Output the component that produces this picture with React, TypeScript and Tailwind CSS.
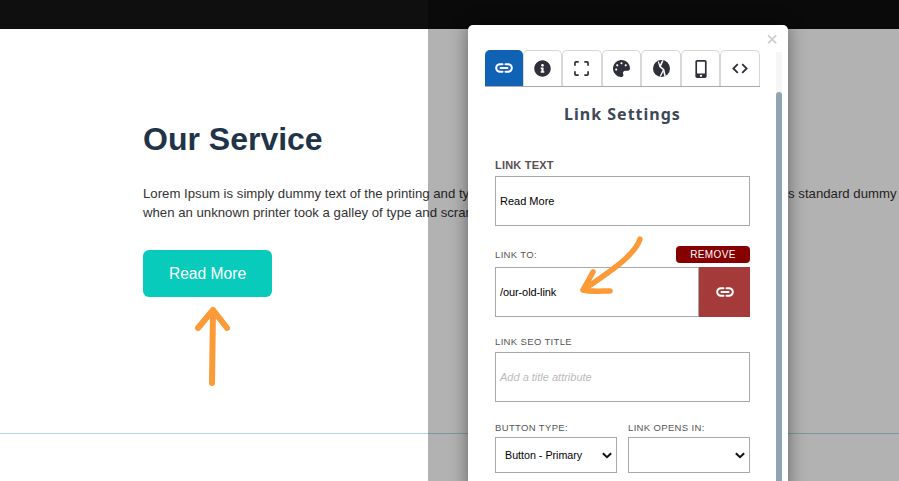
import { FaInfoCircle, FaMobileAlt, FaPalette } from "react-icons/fa";

const sans = "font-['Liberation_Sans',Arial,sans-serif]";

function LinkIcon({ className }: { className: string }) {
  return (
    <svg viewBox="0 0 18 10" className={className} fill="none" stroke="currentColor" strokeWidth="2">
      <path d="M7.5 1.2H5a3.8 3.8 0 0 0 0 7.6h2.5M10.5 1.2H13a3.8 3.8 0 0 1 0 7.6h-2.5M5.5 5h7" strokeLinecap="round" />
    </svg>
  );
}

function ExpandIcon() {
  return (
    <svg viewBox="0 0 16 16" className="w-[15px] h-[15px]" fill="none" stroke="#2f2f3a" strokeWidth="1.8">
      <path d="M1 5V2a1 1 0 0 1 1-1h3M11 1h3a1 1 0 0 1 1 1v3M15 11v3a1 1 0 0 1-1 1h-3M5 15H2a1 1 0 0 1-1-1v-3" />
    </svg>
  );
}

function ApertureIcon() {
  return (
    <svg viewBox="0 0 16 16" className="w-[17px] h-[17px]">
      <circle cx="8" cy="8" r="8" fill="#2f2f3a" />
      <path d="M9.2 0.5 6.6 6.2 10 9.2 11.3 15" fill="none" stroke="#fff" strokeWidth="1.5" />
      <path d="M5 1.5 6.6 6.2M10 9.2 6.8 15.5" fill="none" stroke="#fff" strokeWidth="1.2" />
    </svg>
  );
}

function CodeIcon() {
  return (
    <svg viewBox="0 0 18 12" className="w-[16px] h-[11px]" fill="none" stroke="#2f2f3a" strokeWidth="2">
      <path d="M6.5 1 1.5 6l5 5M11.5 1l5 5-5 5" />
    </svg>
  );
}

function Tab({ children, active }: { children: React.ReactNode; active?: boolean }) {
  if (active) {
    return (
      <div className="flex-1 h-[36px] flex items-center justify-center rounded-t-[5px] bg-[#0f62b4] text-white">
        {children}
      </div>
    );
  }
  return (
    <div className="flex-1 h-[36px] flex items-center justify-center rounded-t-[5px] border border-b-0 border-[#d8d8d8] bg-white text-[#2f2f3a]">
      {children}
    </div>
  );
}

function FieldLabel({ children }: { children: React.ReactNode }) {
  return <div className="text-[9.5px] leading-[12px] tracking-[0.35px] text-[#555]">{children}</div>;
}

function Chevron() {
  return (
    <svg viewBox="0 0 12 8" className="w-[10px] h-[7px]" fill="none" stroke="#111" strokeWidth="2.4">
      <path d="M1 1.2 6 6l5-4.8" />
    </svg>
  );
}

function SelectBox({ value, width }: { value?: string; width: string }) {
  return (
    <div className={`${width} h-[36px] border border-[#a9a9a9] flex items-center justify-between pl-[9px] pr-[4px] text-[10.7px] text-black`}>
      <span>{value}</span>
      <Chevron />
    </div>
  );
}

export default function App() {
  return (
    <div className={`relative w-[899px] h-[481px] overflow-hidden bg-white ${sans}`}>
      <div className="h-[29px] bg-[#0f0f0f]" />

      <div className="pl-[143px] pt-[92px] w-[1100px]">
        <h1 className="text-[32px] leading-[36px] font-bold text-[#1f3449]">Our Service</h1>
        <p className="mt-[27px] text-[13.2px] leading-[19px] text-[#333] whitespace-nowrap">
          Lorem Ipsum is simply dummy text of the printing and typesetting industry. Lorem Ipsum has been the industry's standard dummy text ever since
          <br />
          when an unknown printer took a galley of type and scrambled it to make a type specimen book.
        </p>
        <div className="mt-[28px] w-[129px] h-[47px] rounded-[6px] bg-[#08cbbb] text-white text-[15.6px] flex items-center justify-center">
          Read More
        </div>
        <svg viewBox="0 0 40 90" className="ml-[50px] mt-[9px] w-[40px] h-[90px]" fill="none" stroke="#fb9a37" strokeWidth="6" strokeLinecap="round" strokeLinejoin="round">
          <path d="M5 22 20 4l14 18M20 4l-1 73" />
        </svg>
      </div>

      <div className="absolute left-0 right-0 top-[433px] h-px bg-[#b4d9e0]" />

      {/* dimmed overlay + modal */}
      <div className="absolute left-[428px] right-0 top-0 bottom-0 bg-black/30">
        <div className="absolute left-[40px] top-[25px] w-[320px] h-[470px] bg-white rounded-t-[5px] shadow-[0_0_18px_rgba(0,0,0,0.45)]">
          <div className="absolute right-[10px] top-[5px] text-[#c9c9c9] text-[20px] leading-[18px]">×</div>
          <div className="absolute left-[308px] top-[27px] bottom-0 w-[6px] bg-[#f6f6f6]">
            <div className="absolute left-0 right-0 top-[40px] bottom-0 rounded-t-[3px] bg-[#90a4b2]" />
          </div>

          <div className="pl-[17px] pt-[25px] w-[307px]">
            <div className="flex w-[275px] border-b border-[#aaa] h-[36px] box-content">
              <Tab active><LinkIcon className="w-[18px] h-[10px]" /></Tab>
              <Tab><FaInfoCircle size={17} /></Tab>
              <Tab><ExpandIcon /></Tab>
              <Tab><FaPalette size={17} /></Tab>
              <Tab><ApertureIcon /></Tab>
              <Tab><FaMobileAlt size={18} /></Tab>
              <Tab><CodeIcon /></Tab>
            </div>

            <h2 className="mt-[16px] w-[275px] text-center font-['Noto_Sans',sans-serif] font-bold text-[16px] leading-[22px] tracking-[1px] text-[#3c4858]">
              Link Settings
            </h2>

            <div className="ml-[10px] w-[255px]">
              <div className="mt-[34px] text-[11px] leading-[13px] font-bold tracking-[0.2px] text-[#5a5050]">LINK TEXT</div>
              <div className="mt-[4px] h-[50px] border border-[#a9a9a9] flex items-center pl-[4px] text-[11px] text-black">Read More</div>

              <div className="mt-[20px] h-[17px] flex items-center justify-between">
                <FieldLabel>LINK TO:</FieldLabel>
                <div className="w-[74px] h-[17px] rounded-[4px] bg-[#860000] text-white text-[10px] tracking-[0.4px] flex items-center justify-center">REMOVE</div>
              </div>
              <div className="mt-[4px] h-[50px] flex">
                <div className="flex-1 border border-[#a9a9a9] flex items-center pl-[4px] text-[11px] tracking-[-0.1px] text-black">/our-old-link</div>
                <div className="w-[51px] bg-[#a53a3a] text-white flex items-center justify-center">
                  <LinkIcon className="w-[18px] h-[10px]" />
                </div>
              </div>

              <div className="mt-[19px]"><FieldLabel>LINK SEO TITLE</FieldLabel></div>
              <div className="mt-[4px] h-[50px] border border-[#a9a9a9] flex items-center pl-[4px] text-[11px] italic text-[#bbb]">Add a title attribute</div>

              <div className="mt-[20px] flex justify-between">
                <div>
                  <FieldLabel>BUTTON TYPE:</FieldLabel>
                  <div className="mt-[3px]"><SelectBox value="Button - Primary" width="w-[122px]" /></div>
                </div>
                <div>
                  <FieldLabel>LINK OPENS IN:</FieldLabel>
                  <div className="mt-[3px]"><SelectBox width="w-[122px]" /></div>
                </div>
              </div>
            </div>
          </div>

          <svg viewBox="0 0 90 70" className="absolute left-[105px] top-[208px] w-[90px] h-[70px]" fill="none" stroke="#fb9a37" strokeWidth="5.5" strokeLinecap="round" strokeLinejoin="round">
            <path d="M67 6C62 22 38 38 10 57M20 39 10 57c8 2 18 1 27 1" />
          </svg>
        </div>
      </div>
    </div>
  );
}
